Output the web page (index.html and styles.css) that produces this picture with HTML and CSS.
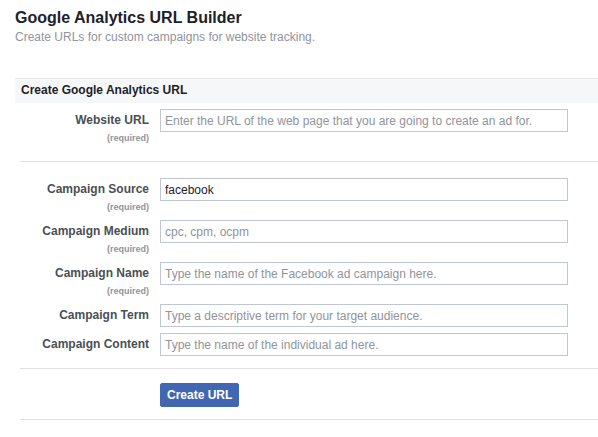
FILE: index.html
```html
<!DOCTYPE html>
<html>
<head>
<meta charset="utf-8">
<title>Google Analytics URL Builder</title>
<link rel="stylesheet" href="styles.css">
</head>
<body>
<div class="page">
  <h1 class="title">Google Analytics URL Builder</h1>
  <p class="subtitle">Create URLs for custom campaigns for website tracking.</p>

  <div class="panel">
    <div class="panel-header">Create Google Analytics URL</div>

    <div class="section section-url">
      <div class="row">
        <div class="label">
          <div class="label-text">Website URL</div>
          <div class="req">(required)</div>
        </div>
        <input class="field" type="text" placeholder="Enter the URL of the web page that you are going to create an ad for.">
      </div>
    </div>

    <div class="section section-fields">
      <div class="row">
        <div class="label">
          <div class="label-text">Campaign Source</div>
          <div class="req">(required)</div>
        </div>
        <input class="field" type="text" value="facebook">
      </div>
      <div class="row">
        <div class="label">
          <div class="label-text">Campaign Medium</div>
          <div class="req">(required)</div>
        </div>
        <input class="field" type="text" placeholder="cpc, cpm, ocpm">
      </div>
      <div class="row">
        <div class="label">
          <div class="label-text">Campaign Name</div>
          <div class="req">(required)</div>
        </div>
        <input class="field" type="text" placeholder="Type the name of the Facebook ad campaign here.">
      </div>
      <div class="row">
        <div class="label">
          <div class="label-text">Campaign Term</div>
        </div>
        <input class="field" type="text" placeholder="Type a descriptive term for your target audience.">
      </div>
      <div class="row">
        <div class="label">
          <div class="label-text">Campaign Content</div>
        </div>
        <input class="field" type="text" placeholder="Type the name of the individual ad here.">
      </div>
    </div>

    <div class="section section-actions">
      <div class="row">
        <div class="label"></div>
        <button class="btn" type="button">Create URL</button>
      </div>
    </div>
  </div>
</div>
</body>
</html>
```

FILE: styles.css
```css
* {
  box-sizing: border-box;
}

html, body {
  margin: 0;
  padding: 0;
  background: #ffffff;
}

body {
  font-family: "Liberation Sans", Arial, Helvetica, sans-serif;
  font-size: 12px;
  color: #1d2129;
}

.page {
  padding: 9px 0 0 15px;
}

.title {
  margin: 0;
  font-size: 16px;
  line-height: 18px;
  font-weight: bold;
  color: #1d2129;
}

.subtitle {
  margin: 2px 0 0 0;
  font-size: 12px;
  line-height: 16px;
  color: #90949c;
}

.panel {
  margin-top: 33px;
}

.panel-header {
  background: #f6f7f9;
  border-top: 1px solid #e5e6e9;
  height: 25px;
  line-height: 23px;
  padding: 0 0 1px 6px;
  font-size: 12px;
  font-weight: bold;
  color: #1d2129;
}

.section {
  margin-left: 5px;
  border-bottom: 1px solid #dddfe2;
}

.section-url {
  padding: 6px 0 10px 0;
}

.section-fields {
  padding: 16px 0 6px 0;
}

.section-actions {
  padding: 14px 0 12px 0;
}

.row {
  display: flex;
  align-items: flex-start;
  gap: 11px;
  margin-bottom: 6px;
}

.section-actions .row {
  margin-bottom: 0;
}

.label {
  width: 129px;
  flex: none;
  text-align: right;
}

.label-text {
  font-size: 12px;
  line-height: 23px;
  font-weight: bold;
  color: #4b4f56;
  white-space: nowrap;
}

.req {
  font-size: 9px;
  line-height: 13px;
  font-weight: bold;
  color: #90949c;
}

.field {
  width: 408px;
  height: 23px;
  margin: 0;
  padding: 0 4px;
  border: 1px solid #bdc7d8;
  border-radius: 0;
  font-family: "Liberation Sans", Arial, Helvetica, sans-serif;
  font-size: 12px;
  color: #1d2129;
  background: #ffffff;
  outline: none;
}

.field::placeholder {
  color: #90949c;
  opacity: 1;
}

.btn {
  height: 24px;
  margin: 0;
  padding: 0 6px;
  border: 1px solid #4267b2;
  border-radius: 2px;
  background: #4267b2;
  color: #ffffff;
  font-family: "Liberation Sans", Arial, Helvetica, sans-serif;
  font-size: 12px;
  font-weight: bold;
  line-height: 22px;
  cursor: pointer;
}
```
